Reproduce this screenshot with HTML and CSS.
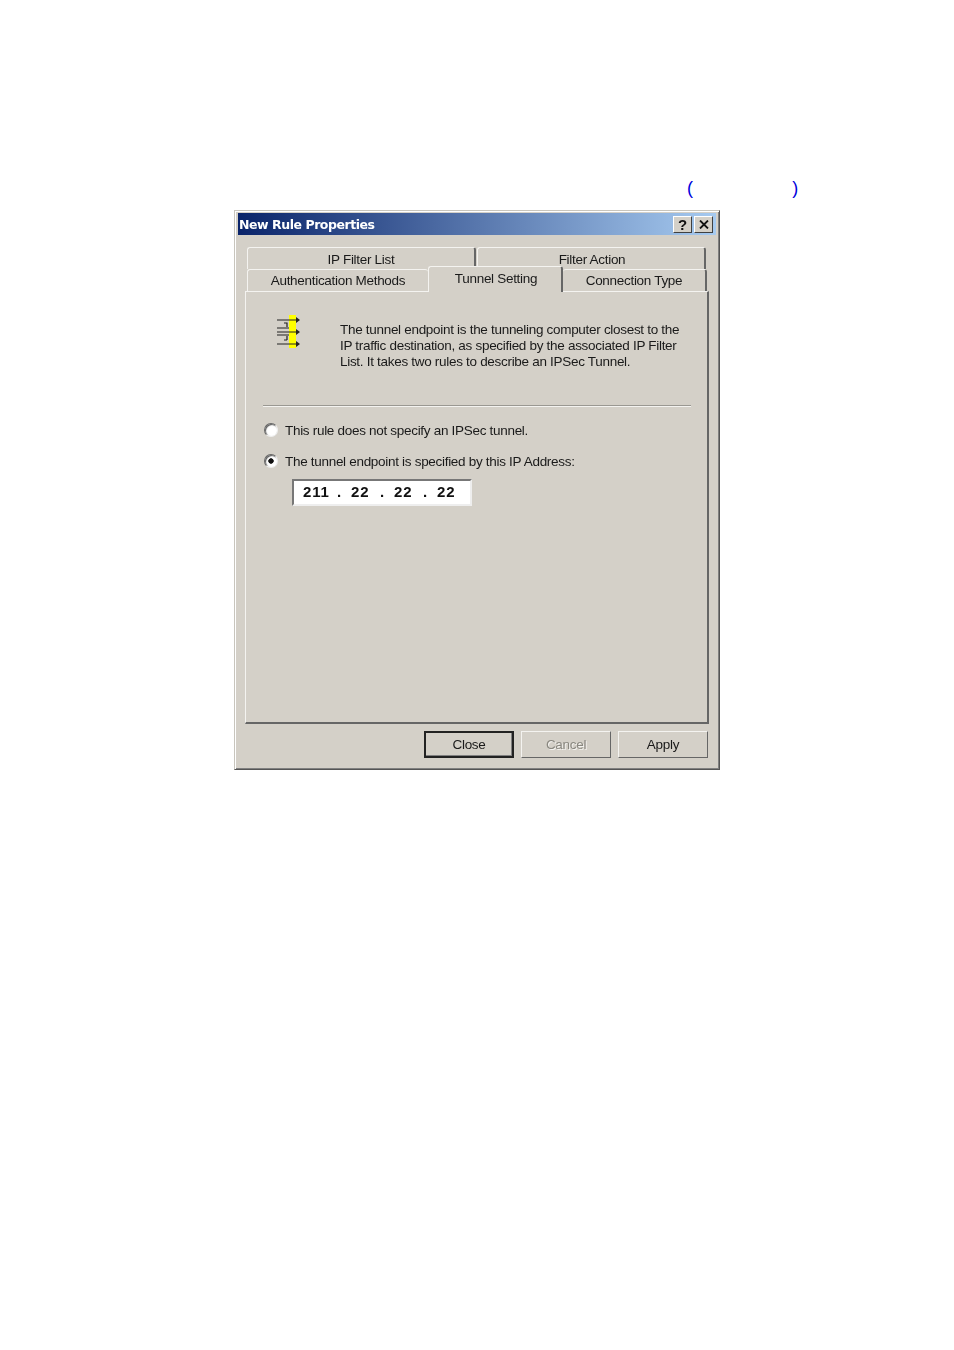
FILE: index.html
```html
<!DOCTYPE html>
<html lang="en">
<head>
    <meta charset="UTF-8">
    <title>New Rule Properties</title>
    <link rel="stylesheet" href="styles.css">
</head>
<body>
    <div class="parens"><span>(</span><span>)</span></div>

    <div class="window">
        <div class="titlebar">
            <span class="title">New Rule Properties</span>
            <div class="title-buttons">
                <button class="title-btn help-btn">?</button>
                <button class="title-btn close-btn">
                    <svg width="10" height="9" viewBox="0 0 10 9"><path d="M1 0.5 L9 8.5 M9 0.5 L1 8.5" stroke="#111" stroke-width="1.8" fill="none"/></svg>
                </button>
            </div>
        </div>

        <div class="tabs">
            <div class="tab-row">
                <div class="tab tab-filter-list">IP Filter List</div>
                <div class="tab tab-filter-action">Filter Action</div>
            </div>
            <div class="tab-row tab-row-front">
                <div class="tab tab-auth">Authentication Methods</div>
                <div class="tab tab-tunnel">Tunnel Setting</div>
                <div class="tab tab-connection">Connection Type</div>
            </div>
        </div>

        <div class="panel">
            <div class="intro">
                <svg class="intro-icon" width="24" height="36" viewBox="0 0 24 36">
                    <rect x="12" y="1" width="7" height="33" fill="#ffff00"/>
                    <g stroke="#222" stroke-width="1.2" fill="none">
                        <path d="M0 6 H20 M0 18 H20 M0 30 H20"/>
                        <path d="M0 14 H12 M0 21 H12"/>
                        <path d="M7 9 H10 V13 M10 26 H7 M10 22 V26"/>
                    </g>
                    <path d="M19 3 L23 6 L19 9 Z M19 15 L23 18 L19 21 Z M19 27 L23 30 L19 33 Z" fill="#222"/>
                </svg>
                <p class="intro-text">The tunnel endpoint is the tunneling computer closest to the<br>IP traffic destination, as specified by the associated IP Filter<br>List. It takes two rules to describe an IPSec Tunnel.</p>
            </div>
            <div class="divider"></div>
            <label class="radio-row">
                <span class="radio"></span>
                <span>This rule does not specify an IPSec tunnel.</span>
            </label>
            <label class="radio-row radio-row-second">
                <span class="radio radio-checked"></span>
                <span>The tunnel endpoint is specified by this IP Address:</span>
            </label>
            <div class="ip-field">
                <span class="octet octet-first">211</span><span class="dot">.</span>
                <span class="octet">22</span><span class="dot">.</span>
                <span class="octet">22</span><span class="dot">.</span>
                <span class="octet">22</span>
            </div>
        </div>

        <div class="actions">
            <button class="button button-default">Close</button>
            <button class="button button-disabled">Cancel</button>
            <button class="button">Apply</button>
        </div>
    </div>
</body>
</html>
```

FILE: styles.css
```css
* {
    box-sizing: border-box;
}

body {
    margin: 0;
    background-color: white;
    font-family: 'Liberation Sans', Arial, sans-serif;
    font-size: 13.5px;
    letter-spacing: -0.3px;
    color: #1a1a1a;
}

.parens {
    display: flex;
    justify-content: space-between;
    width: 111px;
    height: 210px;
    margin-left: 687px;
    padding-top: 178px;
    color: #0000dc;
    font-size: 18px;
    line-height: 20px;
}

.window {
    width: 486px;
    height: 560px;
    margin-left: 234px;
    padding: 2px 3px 3px;
    background-color: #d4d0c8;
    border: 1px solid #c8c5bd;
    border-right-color: #555;
    border-bottom-color: #555;
    box-shadow: inset 1px 1px 0 #fff, inset -1px -1px 0 #808080;
    filter: blur(0.35px);
}

.titlebar {
    display: flex;
    align-items: center;
    justify-content: space-between;
    height: 22px;
    padding: 0 3px 0 1px;
    background: linear-gradient(to right, #0a246a, #a6caf0);
}

.title {
    color: white;
    font-family: 'DejaVu Sans', Verdana, sans-serif;
    font-size: 12.5px;
    font-weight: bold;
    letter-spacing: -0.45px;
}

.title-buttons {
    display: flex;
    gap: 2px;
}

.title-btn {
    display: flex;
    align-items: center;
    justify-content: center;
    width: 19px;
    height: 17px;
    padding: 0;
    background-color: #d4d0c8;
    border: 1px solid;
    border-color: #fff #404040 #404040 #fff;
    font-family: 'Liberation Sans', sans-serif;
    font-size: 15px;
    font-weight: bold;
    color: #111;
}

.tabs {
    padding: 12px 0 0 9px;
}

.tab-row {
    display: flex;
    gap: 1px;
    height: 22px;
}

.tab-row-front {
    gap: 0;
    align-items: flex-end;
}

.tab {
    display: flex;
    align-items: center;
    justify-content: center;
    height: 22px;
    background-color: #d4d0c8;
    border: 1px solid #f4f3f0;
    border-bottom: none;
    border-right: 2px solid #666;
    border-radius: 3px 3px 0 0;
}

.tab-filter-list {
    width: 229px;
    padding-top: 2px;
}

.tab-filter-action {
    width: 229px;
    padding: 2px 0 0 2px;
}

.tab-auth {
    width: 181px;
    border-right: none;
}

.tab-tunnel {
    position: relative;
    z-index: 1;
    width: 135px;
    height: 26px;
    margin-bottom: -1px;
    padding: 0 0 2px 2px;
}

.tab-connection {
    width: 144px;
    border-left: none;
}

.panel {
    height: 433px;
    width: 464px;
    margin-left: 7px;
    padding: 0 16px 0 17px;
    background-color: #d4d0c8;
    border: 1px solid #f4f3f0;
    border-right: 2px solid #666;
    border-bottom: 2px solid #666;
}

.intro {
    display: flex;
    height: 113px;
    padding: 22px 0 0 14px;
}

.intro-icon {
    flex-shrink: 0;
    margin-right: 39px;
}

.intro-text {
    margin: 8px 0 0;
    line-height: 16px;
    white-space: nowrap;
}

.divider {
    height: 2px;
    background-color: #9a9892;
    border-bottom: 1px solid #f4f3f0;
}

.radio-row {
    display: flex;
    align-items: center;
    gap: 7px;
    height: 16px;
    margin: 15px 0 0 1px;
}

.radio-row-second {
    margin-top: 15px;
}

.radio {
    width: 14px;
    height: 14px;
    background-color: white;
    border: 1px solid;
    border-color: #666 #eee #eee #666;
    border-radius: 50%;
    box-shadow: inset 1px 1px 1px #555;
}

.radio-checked {
    background: radial-gradient(circle, #111 0 2.4px, white 3px);
}

.ip-field {
    display: flex;
    align-items: center;
    width: 180px;
    height: 27px;
    margin: 10px 0 0 29px;
    padding: 0 0 2px 9px;
    background-color: white;
    border: 2px solid;
    border-color: #777 #eee #eee #777;
    font-family: 'Liberation Sans', sans-serif;
    font-size: 15px;
    font-weight: bold;
    letter-spacing: 0.8px;
    color: #111;
}

.octet {
    width: 29px;
}

.octet-first {
    width: 34px;
}

.dot {
    width: 14px;
}

.actions {
    display: flex;
    justify-content: flex-end;
    gap: 7px;
    margin: 7px 8px 0 0;
}

.button {
    width: 90px;
    height: 27px;
    padding: 0;
    background-color: #d4d0c8;
    border: 1px solid;
    border-color: #f4f3f0 #666 #666 #f4f3f0;
    font-family: 'Liberation Sans', sans-serif;
    font-size: 13.5px;
    letter-spacing: -0.3px;
    color: #1a1a1a;
}

.button-default {
    border: 2px solid #222;
    box-shadow: inset -1px -1px 0 #808080;
}

.button-disabled {
    color: #8a8880;
    text-shadow: 1px 1px 0 #f4f3f0;
}
```
